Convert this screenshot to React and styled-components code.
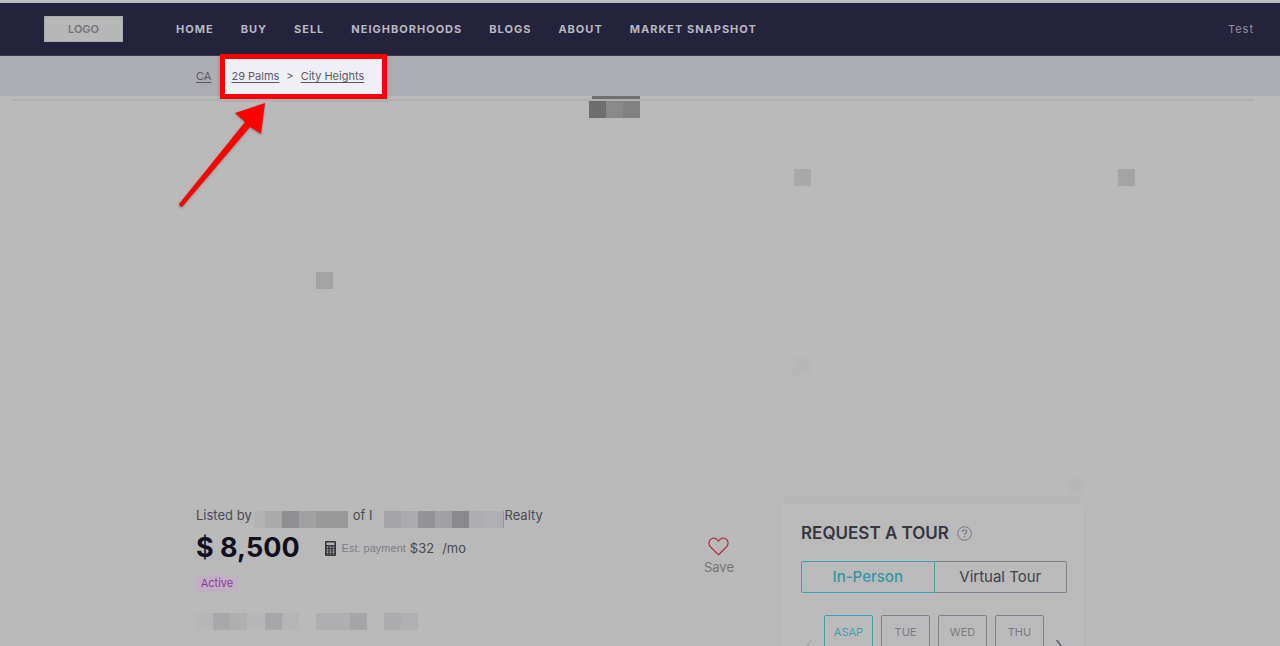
import styled, { createGlobalStyle } from "styled-components";

const GlobalStyle = createGlobalStyle`
  * {
    box-sizing: border-box;
  }

  body {
    margin: 0;
    color: #4a4a56;
    background: #b9b9b9;
    font-family: Inter, "Liberation Sans", sans-serif;
    font-size: 13px;
    line-height: 16px;
  }

  button {
    margin: 0;
    padding: 0;
    border: none;
    background: none;
    color: inherit;
    font: inherit;
    cursor: pointer;
  }
`;

const Page = styled.div`
  position: relative;
  height: 100vh;
  overflow: hidden;
`;

const Header = styled.header`
  display: flex;
  align-items: center;
  height: 56px;
  padding: 0 26px 0 44px;
  border-top: 3px solid #bebebf;
  border-bottom: 1px solid #3a3950;
  background: #24233e;
`;

const Logo = styled.a`
  display: flex;
  align-items: center;
  justify-content: center;
  width: 79px;
  height: 26px;
  margin-right: 53px;
  border: 1px solid #aaaaaa;
  background: #b7b7b7;
  color: #75757a;
  font-size: 11px;
  font-weight: 600;
  text-decoration: none;
`;

const Nav = styled.nav`
  display: flex;
  flex: 1;
  gap: 27px;
`;

const NavLink = styled.a`
  color: #b8b8bd;
  font-size: 11px;
  font-weight: 700;
  letter-spacing: 1px;
  text-decoration: none;
`;

const UserLink = styled(NavLink)`
  color: #9291a2;
  font-weight: 400;
`;

const BreadcrumbBar = styled.nav`
  height: 40px;
  background: #acadb2;
`;

const Container = styled.div`
  max-width: 888px;
  margin: 0 auto;
`;

const Breadcrumbs = styled(Container)`
  display: flex;
  align-items: center;
  height: 40px;
  color: #5a5a66;
  font-size: 11px;
`;

const Crumb = styled.a`
  color: inherit;
  text-underline-offset: 2px;
`;

const Highlight = styled.div`
  display: flex;
  flex: none;
  align-items: center;
  gap: 7px;
  width: 167px;
  height: 45px;
  margin-left: 9px;
  padding-left: 6px;
  border: 5px solid #fe0000;
  background: #f0eff6;
  box-shadow: 0 1px 3px rgba(0, 0, 0, 0.25);
`;

const Gallery = styled.section`
  position: relative;
  height: 399px;
  padding: 3px 26px 0 12px;
`;

const Rule = styled.hr`
  height: 2px;
  margin: 0;
  border: none;
  background: #aeafb1;
`;

const GalleryTab = styled.div`
  position: absolute;
  top: 0;
  left: 592px;
  width: 48px;
  height: 3px;
  background: #6f6f70;
`;

const TabLabel = styled.div`
  position: absolute;
  top: 5px;
  left: 589px;
`;

const Tile = styled.span`
  position: absolute;
  top: ${(props) => props.$y}px;
  left: ${(props) => props.$x}px;
  width: 17px;
  height: 17px;
  background: ${(props) => props.$color};
`;

const MosaicRow = styled.span`
  display: flex;
  height: 17px;
`;

const Block = styled.span`
  width: ${(props) => props.$width || 17}px;
  background: ${(props) => props.$color};
`;

const Listing = styled(Container)`
  display: flex;
  align-items: flex-start;
  justify-content: space-between;
`;

const Summary = styled.section`
  width: 538px;
  padding-top: 12px;
`;

const ListedBy = styled.div`
  display: flex;
  align-items: flex-start;
  height: 21px;
`;

const Redacted = styled.span`
  padding-top: 4px;
  margin-left: ${(props) => props.$space}px;
`;

const Office = styled.span`
  margin-left: 5px;
`;

const PriceRow = styled.div`
  display: flex;
  justify-content: space-between;
`;

const PriceLine = styled.div`
  display: flex;
  align-items: center;
  height: 40px;
`;

const Price = styled.h1`
  margin: 0 25px 0 0;
  color: #11101f;
  font-size: 27px;
  font-weight: 700;
  line-height: 40px;
`;

const Estimate = styled.div`
  display: flex;
  align-items: center;
  gap: 4px;

  small {
    color: #7f7f86;
    font-family: "Liberation Sans", sans-serif;
    font-size: 11px;
  }

  svg {
    margin-right: 2px;
  }
`;

const PerMonth = styled.span`
  margin-left: 4px;
`;

const Status = styled.div`
  width: 42px;
  height: 17px;
  margin-top: 7px;
  background: #c1b0c4;
  color: #8b3a9b;
  font-size: 11px;
  line-height: 17px;
  text-align: center;
`;

const SaveButton = styled.button`
  display: flex;
  flex-direction: column;
  align-items: center;
  gap: 3px;
  align-self: flex-start;
  margin-top: 9px;
  color: #75757b;
`;

const Address = styled.div`
  padding-top: 21px;
`;

const TourCard = styled.aside`
  width: 303px;
  height: 300px;
  margin-top: 8px;
  padding: 20px 17px 20px 20px;
  background: #bababa;
  box-shadow: 0 0 5px #aeb3b6;
`;

const TourTitle = styled.h2`
  display: flex;
  align-items: center;
  gap: 8px;
  height: 20px;
  margin: 0 0 18px;
  color: #363543;
  font-size: 17px;
  font-weight: 600;
`;

const TourTypes = styled.div`
  display: flex;
`;

const TourType = styled.button`
  flex: 1;
  height: 32px;
  border: 1px solid ${(props) => (props.$active ? "#3d9fb4" : "#80808d")};
  border-left-width: ${(props) => (props.$active ? 1 : 0)}px;
  border-radius: ${(props) => (props.$active ? "2px 0 0 2px" : "0 2px 2px 0")};
  color: ${(props) => (props.$active ? "#3297ab" : "#42424f")};
  font-size: 15px;
  font-weight: ${(props) => (props.$active ? 500 : 400)};
`;

const Days = styled.div`
  display: flex;
  align-items: center;
  justify-content: space-between;
  margin-top: 22px;
  padding: 0 4px;
`;

const DayList = styled.div`
  display: flex;
  gap: 8px;
`;

const Day = styled.button`
  display: flex;
  align-items: flex-start;
  justify-content: center;
  width: 49px;
  height: 66px;
  padding-top: 8px;
  border: 1px solid ${(props) => (props.$active ? "#3d9fb4" : "#80808d")};
  border-radius: 2px;
  color: ${(props) => (props.$active ? "#3d9fb4" : "#7b7b85")};
  font-size: 11px;
`;

const Arrow = styled.svg`
  position: absolute;
  top: 98px;
  left: 174px;
  filter: drop-shadow(0 1px 1px rgba(0, 0, 0, 0.3));
`;

const navItems = ["HOME", "BUY", "SELL", "NEIGHBORHOODS", "BLOGS", "ABOUT", "MARKET SNAPSHOT"];

const days = ["ASAP", "TUE", "WED", "THU"];

const tiles = [
  { x: 794, y: 73, color: "#a9a9a9" },
  { x: 1118, y: 73, color: "#a4a4a4" },
  { x: 316, y: 176, color: "#a3a3a3" },
  { x: 794, y: 261, color: "#b7b7b7" },
  { x: 1067, y: 381, color: "#b7b7b7" },
];

const tabBlocks = [["#6d6d6d"], ["#898989"], ["#818181"]];

const agentBlocks = [["#b3b3b3", 11], ["#aaaaab"], ["#8f8f91"], ["#a0a0a1"], ["#999999", 32]];

const officeBlocks = [
  ["#a4a4a6"], ["#acacae"], ["#939395"], ["#a0a0a2"], ["#88888d"], ["#adadb2"], ["#b0afb4"], ["#94949a", 1],
];

const addressBlocks = [
  ["#b6b6b7"], ["#a9a9ab"], ["#afafb0"], ["#b7b7b7", 18], ["#a7a7a9"], ["#b5b5b6"], ["#b9b9b9"],
  ["#afafb2", 34], ["#a6a6a8"], ["#b9b9b9"], ["#acacae"], ["#b0b0b2"],
];

const Mosaic = ({ blocks }) => (
  <MosaicRow aria-hidden="true">
    {blocks.map(([color, width], index) => (
      <Block key={index} $color={color} $width={width} />
    ))}
  </MosaicRow>
);

const CalculatorIcon = () => (
  <svg width="11" height="15" viewBox="0 0 11 15" fill="none" aria-hidden="true">
    <rect width="11" height="15" rx="1" fill="#35343f" />
    <rect x="1.5" y="1.5" width="8" height="2.6" fill="#b0b0b2" />
    <path d="M2.5 5.5v8M5.5 5.5v8M8.5 5.5v8" stroke="#a5a5a8" strokeWidth="1.6" strokeDasharray="1.6 0.8" />
  </svg>
);

const HeartIcon = () => (
  <svg width="21" height="19" viewBox="0 0 21 19" fill="none" aria-hidden="true">
    <path
      d="M10.5 17.8 2.6 10C.6 8 .4 4.7 2.2 2.7c2-2.2 5.4-2.1 7.3.1l1 1.3 1-1.3c1.9-2.2 5.3-2.3 7.3-.1 1.8 2 1.6 5.3-.4 7.3z"
      stroke="#b23a46"
      strokeWidth="1.3"
      strokeLinejoin="round"
    />
  </svg>
);

const HelpIcon = () => (
  <svg width="15" height="15" viewBox="0 0 15 15" fill="none" stroke="#767680" aria-hidden="true">
    <circle cx="7.5" cy="7.5" r="6.8" />
    <path d="M5.4 6c0-1.3.9-2 2.1-2s2.1.7 2.1 1.8c0 1.4-2.1 1.5-2.1 3M7.5 9.9v1.3" strokeWidth="1.2" />
  </svg>
);

const Chevron = ({ color, d }) => (
  <svg width="7" height="14" viewBox="0 0 7 14" fill="none" stroke={color} aria-hidden="true">
    <path d={d} strokeWidth="1.2" />
  </svg>
);

const App = () => {
  return (
    <Page>
      <GlobalStyle />
      <Header>
        <Logo href="#">LOGO</Logo>
        <Nav>
          {navItems.map((item) => (
            <NavLink key={item} href="#">{item}</NavLink>
          ))}
        </Nav>
        <UserLink href="#">Test</UserLink>
      </Header>

      <BreadcrumbBar aria-label="Breadcrumb">
        <Breadcrumbs>
          <Crumb href="#">CA</Crumb>
          <Highlight>
            <Crumb href="#">29 Palms</Crumb>
            <span>&gt;</span>
            <Crumb href="#">City Heights</Crumb>
          </Highlight>
        </Breadcrumbs>
      </BreadcrumbBar>

      <Gallery>
        <Rule />
        <GalleryTab />
        <TabLabel>
          <Mosaic blocks={tabBlocks} />
        </TabLabel>
        {tiles.map((tile) => (
          <Tile key={`${tile.x}-${tile.y}`} $x={tile.x} $y={tile.y} $color={tile.color} />
        ))}
      </Gallery>

      <Listing>
        <Summary>
          <ListedBy>
            <span>Listed by</span>
            <Redacted $space={2}>
              <Mosaic blocks={agentBlocks} />
            </Redacted>
            <Office>of I</Office>
            <Redacted $space={12}>
              <Mosaic blocks={officeBlocks} />
            </Redacted>
            <span>Realty</span>
          </ListedBy>
          <PriceRow>
            <div>
              <PriceLine>
                <Price>$ 8,500</Price>
                <Estimate>
                  <CalculatorIcon />
                  <small>Est. payment</small>
                  <span>$32</span>
                  <PerMonth>/mo</PerMonth>
                </Estimate>
              </PriceLine>
              <Status>Active</Status>
            </div>
            <SaveButton type="button">
              <HeartIcon />
              Save
            </SaveButton>
          </PriceRow>
          <Address>
            <Mosaic blocks={addressBlocks} />
          </Address>
        </Summary>

        <TourCard>
          <TourTitle>
            REQUEST A TOUR
            <HelpIcon />
          </TourTitle>
          <TourTypes>
            <TourType type="button" $active>In-Person</TourType>
            <TourType type="button">Virtual Tour</TourType>
          </TourTypes>
          <Days>
            <button type="button" aria-label="Previous days">
              <Chevron color="#a2a2a8" d="M6.5 0 1 7l5.5 7" />
            </button>
            <DayList>
              {days.map((day, index) => (
                <Day key={day} type="button" $active={index === 0}>{day}</Day>
              ))}
            </DayList>
            <button type="button" aria-label="Next days">
              <Chevron color="#4a4a56" d="m.5 0 5.5 7-5.5 7" />
            </button>
          </Days>
        </TourCard>
      </Listing>

      <Arrow width="96" height="114" viewBox="174 98 96 114" aria-hidden="true">
        <path
          d="M265 103 235 113l10 9-66 82q0 2 3 3l68-80 11 7z"
          fill="#fe0000"
        />
      </Arrow>
    </Page>
  );
};

export default App;
